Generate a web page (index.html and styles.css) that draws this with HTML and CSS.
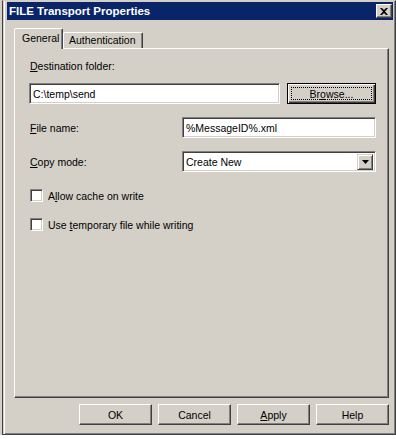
FILE: index.html
```html
<!DOCTYPE html>
<html lang="en">
  <head>
    <meta charset="UTF-8" />
    <title>FILE Transport Properties</title>
    <link rel="stylesheet" href="styles.css">
  </head>
  <body>
    <div class="desktop">
      <div class="backdrop"></div>
      <div class="window">
        <div class="titlebar">
          <span class="title">FILE Transport Properties</span>
          <span class="close-btn">
            <svg width="8" height="7" viewBox="0 0 8 7">
              <path d="M0 0h2l2 2 2-2h2L5 3.5 8 7H6L4 5 2 7H0l3-3.5z" fill="#000"/>
            </svg>
          </span>
        </div>

        <div class="dialog-body">
          <div class="tabs">
            <div class="tab selected">General</div>
            <div class="tab">Authentication</div>
          </div>

          <div class="panel">
            <div class="field-label"><u>D</u>estination folder:</div>
            <div class="row">
              <div class="textbox wide">C:\temp\send</div>
              <div class="button focused"><span class="focus-rect">Br<u>o</u>wse...</span></div>
            </div>

            <div class="row pair">
              <label><u>F</u>ile name:</label>
              <div class="textbox">%MessageID%.xml</div>
            </div>

            <div class="row pair">
              <label><u>C</u>opy mode:</label>
              <div class="textbox combo">
                <span>Create New</span>
                <span class="drop-btn">
                  <svg width="7" height="4" viewBox="0 0 7 4"><path d="M0 0h7L3.5 4z" fill="#000"/></svg>
                </span>
              </div>
            </div>

            <div class="check first">
              <span class="box"></span>
              <span>A<u>l</u>low cache on write</span>
            </div>
            <div class="check">
              <span class="box"></span>
              <span>Use <u>t</u>emporary file while writing</span>
            </div>
          </div>

          <div class="buttons">
            <div class="button">OK</div>
            <div class="button">Cancel</div>
            <div class="button"><u>A</u>pply</div>
            <div class="button">Help</div>
          </div>
        </div>
      </div>
    </div>
  </body>
</html>
```

FILE: styles.css
```css
body {
  margin: 0;
  background-color: #fff;
  font-family: "Liberation Sans", Arial, sans-serif;
  font-size: 10.5px;
  color: #000;
}

.desktop {
  display: flex;
  height: 435px;
}

.backdrop {
  width: 3px;
  background-color: #d4d0c8;
}

.window {
  flex: 1;
  box-sizing: border-box;
  background-color: #d4d0c8;
  border: 1px solid;
  border-color: #d4d0c8 #404040 #404040 #404040;
  padding: 1px 2px 0 4px;
  box-shadow: inset 1px 0 #d4d0c8, inset 2px 0 #fff, inset -1px -1px #808080;
}

.titlebar {
  height: 18px;
  background-color: #0a246a;
  display: flex;
  align-items: center;
  justify-content: space-between;
  padding: 0 1px 0 2px;
}

.title {
  color: #fff;
  font-weight: bold;
  font-size: 11.5px;
}

.close-btn {
  width: 14px;
  height: 12px;
  background-color: #d4d0c8;
  border: 1px solid;
  border-color: #fff #404040 #404040 #fff;
  box-shadow: inset -1px -1px #808080;
  display: flex;
  align-items: center;
  justify-content: center;
}

.dialog-body {
  padding: 8px 4px 0 7px;
}

.tabs {
  display: flex;
  align-items: flex-end;
  height: 20px;
}

.tab {
  box-sizing: border-box;
  height: 16px;
  border: 1px solid;
  border-bottom: none;
  border-color: #fff #404040 transparent #fff;
  border-radius: 2px 2px 0 0;
  box-shadow: inset -1px 0 #808080;
  padding: 1px 6px 0 5px;
  line-height: 13px;
}

.tab.selected {
  height: 21px;
  width: 49px;
  margin-bottom: -1px;
  padding: 3px 0 0 7px;
  background-color: #d4d0c8;
  position: relative;
  z-index: 1;
}

.panel {
  box-sizing: border-box;
  height: 350px;
  border: 1px solid;
  border-color: #fff #404040 #404040 #fff;
  box-shadow: inset -1px -1px #808080;
  padding: 11px 12px 0 14px;
}

.field-label {
  line-height: 13px;
  padding-left: 1px;
  margin-bottom: 10px;
}

.row {
  display: flex;
  align-items: center;
  height: 21px;
}

.row.pair {
  margin-top: 13px;
}

.row.pair label {
  width: 152px;
  padding-left: 1px;
}

.textbox {
  flex: 1;
  box-sizing: border-box;
  height: 21px;
  background-color: #fff;
  border: 1px solid;
  border-color: #808080 #fff #fff #808080;
  box-shadow: inset 1px 1px #404040, inset -1px -1px #d4d0c8;
  padding: 0 3px;
  display: flex;
  align-items: center;
}

.textbox.wide {
  flex: none;
  width: 251px;
}

.textbox.combo {
  justify-content: space-between;
  padding-right: 2px;
}

.drop-btn {
  box-sizing: border-box;
  width: 16px;
  height: 16px;
  background-color: #d4d0c8;
  border: 1px solid;
  border-color: #d4d0c8 #404040 #404040 #d4d0c8;
  box-shadow: inset 1px 1px #fff, inset -1px -1px #808080;
  display: flex;
  align-items: center;
  justify-content: center;
}

.button {
  box-sizing: border-box;
  width: 73px;
  height: 21px;
  background-color: #d4d0c8;
  border: 1px solid;
  border-color: #fff #404040 #404040 #fff;
  box-shadow: inset -1px -1px #808080;
  display: flex;
  align-items: center;
  justify-content: center;
}

.row .button {
  width: 89px;
  margin-left: 7px;
}

.button.focused {
  border-color: #000;
  box-shadow: inset 1px 1px #fff, inset -1px -1px #404040, inset -2px -2px #808080;
  padding: 3px;
}

.focus-rect {
  flex: 1;
  align-self: stretch;
  display: flex;
  align-items: center;
  justify-content: center;
  border: 1px dotted #000;
}

.check {
  display: flex;
  align-items: center;
  gap: 5px;
  height: 13px;
  margin-top: 16px;
  padding-left: 1px;
}

.check.first {
  margin-top: 17px;
}

.check .box {
  box-sizing: border-box;
  width: 13px;
  height: 13px;
  background-color: #fff;
  border: 1px solid;
  border-color: #808080 #fff #fff #808080;
  box-shadow: inset 1px 1px #404040, inset -1px -1px #d4d0c8;
}

.buttons {
  display: flex;
  justify-content: flex-end;
  gap: 6px;
  margin-top: 6px;
  padding-right: 0;
}
```
